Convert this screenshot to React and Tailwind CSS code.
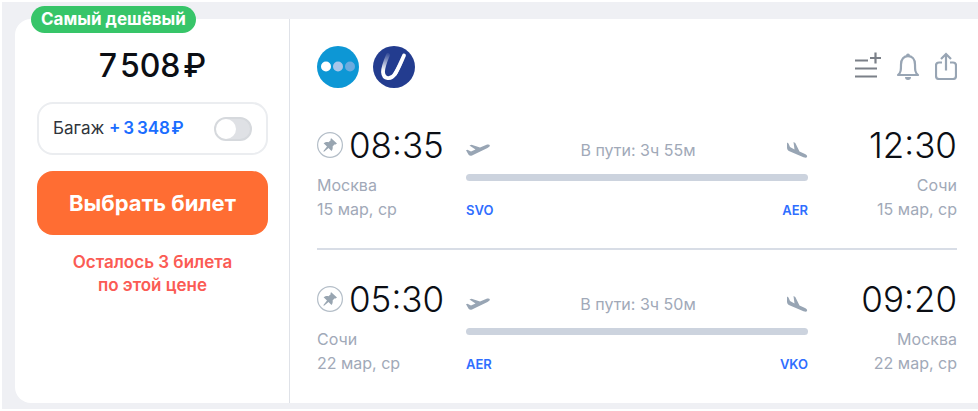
import React, { useState } from 'react';

const flights = [
  {
    id: 'there',
    departTime: '08:35',
    arriveTime: '12:30',
    fromCity: 'Москва',
    toCity: 'Сочи',
    date: '15 мар, ср',
    duration: 'В пути: 3ч 55м',
    fromCode: 'SVO',
    toCode: 'AER'
  },
  {
    id: 'back',
    departTime: '05:30',
    arriveTime: '09:20',
    fromCity: 'Сочи',
    toCity: 'Москва',
    date: '22 мар, ср',
    duration: 'В пути: 3ч 50м',
    fromCode: 'AER',
    toCode: 'VKO'
  }
];

const DotsLogo = () => (
  <svg viewBox="0 0 42 42" className="size-[42px]" role="img" aria-label="Авиакомпания">
    <circle cx="21" cy="21" r="21" fill="#0d97d5" />
    <circle cx="9" cy="20.5" r="5" fill="#fff" />
    <circle cx="21" cy="20.5" r="5" fill="#a9c6ea" />
    <circle cx="33" cy="20.5" r="5" fill="#6cabdf" />
  </svg>
);

const ULogo = () => (
  <svg viewBox="0 0 42 42" className="size-[42px]" role="img" aria-label="Utair">
    <defs>
      <linearGradient id="stroke-fade" gradientUnits="userSpaceOnUse" x1="15" y1="8" x2="11" y2="25">
        <stop offset="0" stopColor="#fff" stopOpacity="0.1" />
        <stop offset="1" stopColor="#fff" />
      </linearGradient>
    </defs>
    <circle cx="21" cy="21" r="21" fill="#233c8f" />
    <path
      d="M15 9 C12 16 10 21 10 26 C10.500 33.500 18 34 22 28 C25.500 22.500 28 16 31 9.500"
      fill="none"
      stroke="url(#stroke-fade)"
      strokeWidth="3.800"
      strokeLinecap="round"
    />
    <path d="M22 28 C25.500 22.500 28 16 31 9.500" fill="none" stroke="#fff" strokeWidth="3.800" strokeLinecap="round" />
  </svg>
);

const ListPlusIcon = () => (
  <svg viewBox="0 0 26 28" className="h-7 w-[26px]" fill="none" stroke="#7b8088" strokeWidth="2.200" aria-hidden="true">
    <path d="M0 8.500h13M0 16.500h22M0 24.500h22M15 6h11M20.500 0.500v11" />
  </svg>
);

const BellIcon = () => (
  <svg viewBox="0 0 24 28" className="h-7 w-6" aria-hidden="true">
    <path d="M2 23 C5 20.500 5 18 5 12.500 C5 7 8 4.200 12 4.200 C16 4.200 19 7 19 12.500 C19 18 19 20.500 22 23 Z" fill="none" stroke="#98a5b4" strokeWidth="2.200" strokeLinejoin="round" />
    <path d="M10 4a2 2.400 0 0 1 4 0ZM9 25h6a3 3 0 0 1-6 0Z" fill="#98a5b4" />
  </svg>
);

const ShareIcon = () => (
  <svg viewBox="0 0 22 28" className="h-7 w-[22px]" fill="none" stroke="#98a5b4" strokeWidth="2.200" aria-hidden="true">
    <path d="M7 10.500H4a3 3 0 0 0-3 3v10.500a3 3 0 0 0 3 3h14a3 3 0 0 0 3-3V13.500a3 3 0 0 0-3-3h-3M11 18.500V2M6 7l5-5 5 5" />
  </svg>
);

const PinIcon = () => (
  <svg viewBox="0 0 26 26" className="size-[26px]" aria-hidden="true">
    <circle cx="13" cy="13" r="12.400" fill="#fff" stroke="#b4bec8" strokeWidth="1.200" />
    <path d="M14.200 6.200 L20 11.600 L18.500 12.500 L17.400 12.400 L15.600 14.500 C16 16.200 15.600 17.600 14.500 19 L11.500 16 L7 19.800 L6.300 19.200 L10 14.500 L6.600 11.300 C8.400 10 9.900 9.800 11.500 10.200 L13.700 8.200 L13.500 7.100 Z" fill="#98a5b1" />
  </svg>
);

const TakeoffIcon = () => (
  <svg viewBox="0 0 24 14" className="h-3.5 w-6" aria-hidden="true">
    <path d="M0 7.200 L1.500 6.700 L5 8.600 L9.500 6.600 L3.500 2.500 L5.500 1.800 L14 4.400 L20 2 C22 1.300 23.500 1.500 23.800 2.300 C24 3.300 23 4.300 21.500 4.900 L6 12.500 C4.500 13.100 3.500 12.700 2.600 11.700 Z" fill="#98a5b4" />
  </svg>
);

const LandingIcon = () => (
  <svg viewBox="0 0 22 18" className="h-[18px] w-[22px]" aria-hidden="true">
    <path d="M1 1.500 L2.500 2.500 L4 6 L8.500 8.500 L7.500 1 L9.300 2 L13.500 10.500 L19 13 C20.800 14 21.500 15 21 16 C20.500 17 19 16.800 17.500 16.200 L4 10.500 C1.500 9.500 1 8 1 6.500 Z" fill="#98a5b4" />
  </svg>
);

const PricePanel = () => {
  const [baggage, setBaggage] = useState(false);

  return (
    <aside className="flex w-[275px] shrink-0 flex-col border-r border-[#dfe2e8] pr-[21px] pl-[22px]">
      <div className="-mt-[13px] -ml-1.5 self-start rounded-full bg-[#37c569] px-2.5 text-[17px] leading-[27px] font-bold text-white">
        Самый дешёвый
      </div>
      <p className="mt-[13px] text-center text-[32px] leading-10 font-medium text-[#0b0e14]">7&#8202;508&#8202;₽</p>

      <label className="mt-4 flex h-[53px] cursor-pointer items-center justify-between rounded-2xl border-2 border-[#ebedf0] px-3.5 text-[17px] text-[#30343b]">
        <span>
          Багаж <span className="font-semibold text-[#1a6dff]">+&#8201;3&#8201;348&#8202;₽</span>
        </span>
        <input
          type="checkbox"
          role="switch"
          checked={baggage}
          onChange={(e) => setBaggage(e.target.checked)}
          className="peer sr-only"
        />
        <span className="flex h-6 w-[38px] rounded-full border-2 border-[#d6d9dd] bg-[#dfe1e5] peer-checked:justify-end peer-checked:border-[#1a6dff] peer-checked:bg-[#1a6dff]">
          <span className="size-5 rounded-full bg-white" />
        </span>
      </label>

      <button
        type="button"
        className="mt-4 h-16 cursor-pointer rounded-2xl bg-[#ff6d33] text-[22px] font-bold text-white"
      >
        Выбрать билет
      </button>

      <p className="mt-4 text-center text-[17px] leading-[23px] font-semibold text-[#fb5b54]">
        Осталось 3 билета
        <br />
        по этой цене
      </p>
    </aside>
  );
};

const FlightLeg = ({ flight }) => (
  <section className="grid grid-cols-[149px_1fr_149px] text-base text-[#a1a9b8]">
    <div>
      <div className="flex h-12 items-center gap-1.5">
        <button type="button" aria-label="Закрепить рейс" className="cursor-pointer">
          <PinIcon />
        </button>
        <time className="text-[35px] leading-11 font-light text-[#0b0e14]">{flight.departTime}</time>
      </div>
      <p className="mt-1 leading-6">{flight.fromCity}</p>
      <p className="leading-6">{flight.date}</p>
    </div>

    <div className="flex flex-col pt-[17px]">
      <div className="flex h-6 items-center justify-between">
        <TakeoffIcon />
        <span>{flight.duration}</span>
        <LandingIcon />
      </div>
      <div className="mt-3 h-[7px] rounded-full bg-[#ccd3de]" />
      <div className="mt-[17px] flex justify-between text-[13px] leading-6 font-semibold text-[#2f6eff]">
        <span>{flight.fromCode}</span>
        <span>{flight.toCode}</span>
      </div>
    </div>

    <div className="text-right">
      <time className="block text-[35px] leading-12 font-light text-[#0b0e14]">{flight.arriveTime}</time>
      <p className="mt-1 leading-6">{flight.toCity}</p>
      <p className="leading-6">{flight.date}</p>
    </div>
  </section>
);

const App = () => (
  <div className="bg-white pt-0.5 pl-0.5 font-['Inter','Liberation_Sans',sans-serif]">
    <main className="bg-[#eff0f4] pt-[17px] pb-1.5 pl-[13px]">
      <article className="flex rounded-l-2xl bg-white">
        <PricePanel />
        <div className="min-w-0 flex-1 pt-[27px] pr-[21px] pb-[27px] pl-[27px]">
          <header className="flex items-start justify-between">
            <div className="flex gap-3.5">
              <DotsLogo />
              <ULogo />
            </div>
            <div className="flex gap-[15px] pt-1.5">
              <button type="button" aria-label="Добавить в список" className="cursor-pointer">
                <ListPlusIcon />
              </button>
              <button type="button" aria-label="Подписаться на цену" className="cursor-pointer">
                <BellIcon />
              </button>
              <button type="button" aria-label="Поделиться" className="cursor-pointer">
                <ShareIcon />
              </button>
            </div>
          </header>
          <div className="mt-[33px]">
            <FlightLeg flight={flights[0]} />
          </div>
          <hr className="mt-[26px] mb-[25px] border-t-2 border-[#d8dde6]" />
          <FlightLeg flight={flights[1]} />
        </div>
      </article>
    </main>
  </div>
);

export default App;
